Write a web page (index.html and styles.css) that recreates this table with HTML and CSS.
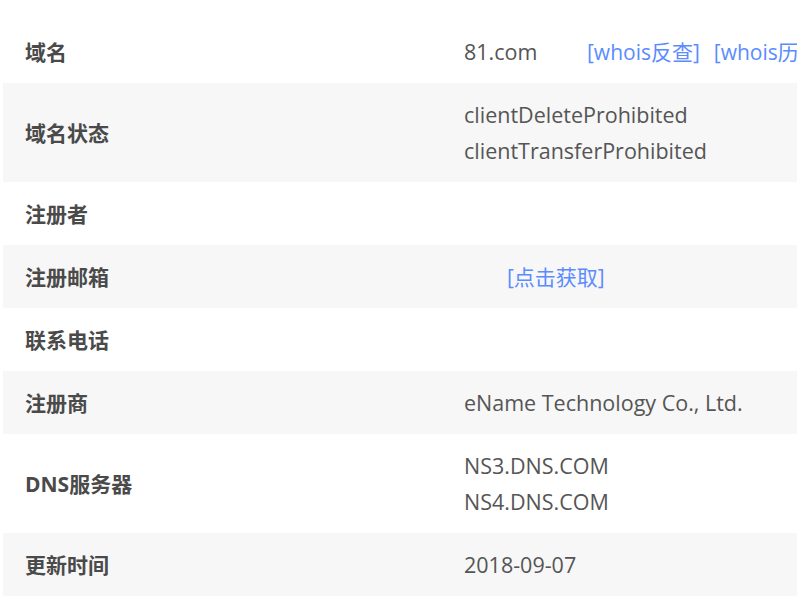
FILE: index.html
```html
<!DOCTYPE html>
<html lang="zh-CN">
<head>
<meta charset="utf-8">
<title>Whois</title>
<link rel="stylesheet" href="styles.css">
</head>
<body>
<div class="table">
  <div class="row">
    <div class="label">域名</div>
    <div class="value inline"><span class="domain">81.com</span><a class="link">[whois反查]</a><a class="link">[whois历史]</a></div>
  </div>
  <div class="row alt">
    <div class="label">域名状态</div>
    <div class="value"><div>clientDeleteProhibited</div><div>clientTransferProhibited</div></div>
  </div>
  <div class="row">
    <div class="label">注册者</div>
    <div class="value"></div>
  </div>
  <div class="row alt">
    <div class="label">注册邮箱</div>
    <div class="value"><a class="link fetch">[点击获取]</a></div>
  </div>
  <div class="row">
    <div class="label">联系电话</div>
    <div class="value"></div>
  </div>
  <div class="row alt">
    <div class="label">注册商</div>
    <div class="value">eName Technology Co., Ltd.</div>
  </div>
  <div class="row">
    <div class="label">DNS服务器</div>
    <div class="value"><div>NS3.DNS.COM</div><div>NS4.DNS.COM</div></div>
  </div>
  <div class="row alt">
    <div class="label">更新时间</div>
    <div class="value">2018-09-07</div>
  </div>
</div>
</body>
</html>
```

FILE: styles.css
```css
html, body {
  margin: 0;
  padding: 0;
  background: #ffffff;
  overflow: hidden;
}
body {
  font-family: "Open Sans", "Noto Sans CJK SC", sans-serif;
  font-size: 21.5px;
  color: #555555;
}
.table {
  padding: 20px 0 0 3px;
  width: 794px;
}
.row {
  display: grid;
  grid-template-columns: 439px 1fr;
  align-items: center;
  padding: 13.5px 0 13.5px 22px;
  line-height: 36px;
}
.row.alt {
  background: #f7f7f7;
}
.label {
  font-weight: bold;
  color: #4a4a4a;
  font-size: 21px;
}
.value {
  min-height: 36px;
  white-space: nowrap;
  overflow: hidden;
}
.value.inline {
  display: flex;
}
.domain {
  width: 123px;
  flex: none;
}
.link {
  color: #5b8cff;
  cursor: pointer;
  margin-right: 14px;
  flex: none;
  font-size: 21px;
}
.fetch {
  margin-left: 43px;
}
```
